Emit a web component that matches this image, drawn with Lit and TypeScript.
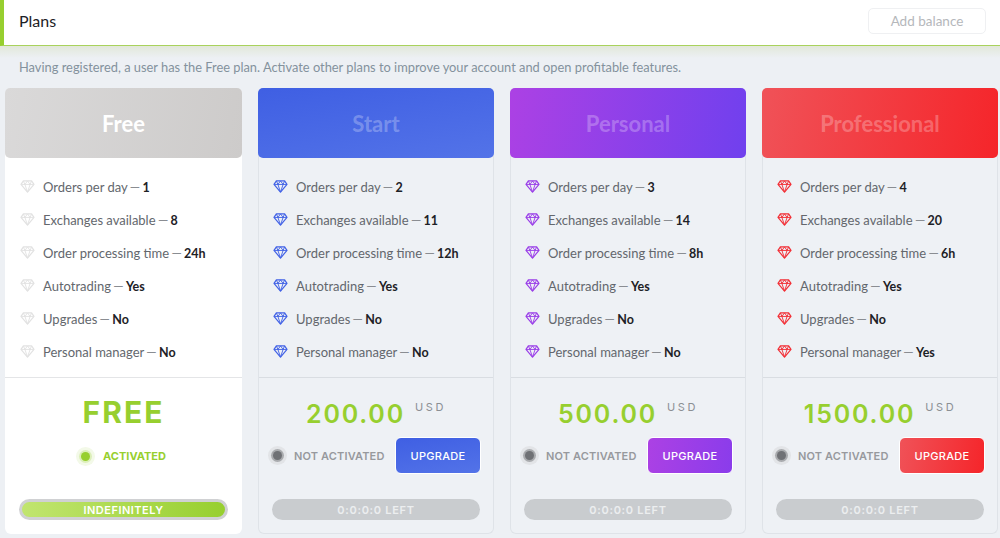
import { LitElement, html, css, svg } from 'lit';
import { customElement, property } from 'lit/decorators.js';

const diamond = (color: string) => html`
  <svg class="gem" viewBox="0 0 16 14" fill="none" stroke="${color}" stroke-width="1.3" stroke-linejoin="round">
    ${svg`<path d="M3.6 1h8.8L15 4.8 8 13 1 4.8z" />
    <path d="M1 4.8h14M5.2 4.8 8 13l2.8-8.2M3.6 1l1.6 3.8L8 1l2.8 3.8L12.4 1" stroke-width="1" />`}
  </svg>
`;

type Plan = {
  name: string;
  head: string;
  gem: string;
  btn: string;
  orders: string;
  exchanges: string;
  time: string;
  manager: string;
  price: string;
};

const plans: Plan[] = [
  { name: 'Start', head: 'linear-gradient(170deg, #3f5fe3, #5373e8)', gem: '#4262e6', btn: 'linear-gradient(170deg, #3f5fe3, #5373e8)', orders: '2', exchanges: '11', time: '12h', manager: 'No', price: '200.00' },
  { name: 'Personal', head: 'linear-gradient(100deg, #ac41e4, #7040ee)', gem: '#9a3fe8', btn: 'linear-gradient(100deg, #ac41e4, #8a3ceb)', orders: '3', exchanges: '14', time: '8h', manager: 'No', price: '500.00' },
  { name: 'Professional', head: 'linear-gradient(100deg, #f05258, #f5252a)', gem: '#f22f36', btn: 'linear-gradient(100deg, #f05258, #f5252a)', orders: '4', exchanges: '20', time: '6h', manager: 'Yes', price: '1500.00' },
];

const rowStyles = css`
  ul {
    list-style: none;
    margin: 0;
    padding: 12px 0 0 14px;
    height: 219px;
    box-sizing: border-box;
  }
  li {
    height: 33px;
    display: flex;
    align-items: center;
    gap: 8px;
    font-size: 13px;
    white-space: pre;
    color: #63676d;
  }
  b {
    color: #1d2126;
    font-size: 12.5px;
    font-weight: 700;
  }
  .dash {
    margin: 0 -1px;
    color: #8a8d92;
  }
  .gem {
    width: 15px;
    height: 13px;
    flex: none;
  }
`;

const row = (gem: string, k: string, v: string) =>
  html`<li>${diamond(gem)}<span>${k} <span class="dash">—</span> <b>${v}</b></span></li>`;

@customElement('plan-card')
class PlanCard extends LitElement {
  @property({ type: Object }) plan!: Plan;

  static styles = [
    rowStyles,
    css`
      :host {
        display: flex;
        flex-direction: column;
        border: 1px solid #dfe3e8;
        border-top: none;
        border-radius: 6px;
        background: #eef1f5;
        font-family: Lato, sans-serif;
      }
      .head {
        height: 70px;
        margin: 0 -1px;
        border-radius: 5px;
        display: flex;
        align-items: center;
        justify-content: center;
        font-size: 22px;
        font-weight: 700;
        color: rgba(255, 255, 255, 0.27);
      }
      .bottom {
        flex: 1;
        border-top: 1px solid #d9dde2;
        padding: 20px 13px 13px;
        display: flex;
        flex-direction: column;
      }
      .price {
        display: flex;
        justify-content: center;
        gap: 10px;
        height: 32px;
      }
      .amount {
        font-family: Inter, sans-serif;
        font-size: 25px;
        font-weight: 600;
        letter-spacing: 1.8px;
        line-height: 32px;
        color: #97cf2f;
      }
      .usd {
        font-family: Inter, sans-serif;
        font-size: 11px;
        letter-spacing: 2.6px;
        line-height: 18px;
        color: #8b8f94;
      }
      .status {
        display: flex;
        align-items: center;
        margin-top: 7px;
        height: 37px;
      }
      .dot {
        width: 9px;
        height: 9px;
        margin: 0 12px 0 1px;
        border-radius: 50%;
        background: #6f7175;
        box-shadow: 0 0 0 2px #a9abae, 0 0 0 5px #e2e4e7;
        flex: none;
      }
      .label {
        flex: 1;
        font-family: Inter, sans-serif;
        font-size: 11px;
        font-weight: 600;
        letter-spacing: 0.15px;
        color: #97999d;
        white-space: nowrap;
      }
      button {
        width: 86px;
        height: 37px;
        margin-right: -1px;
        border: 1px solid #fff;
        border-radius: 6px;
        color: #fff;
        font-family: Inter, sans-serif;
        font-size: 11px;
        font-weight: 500;
        letter-spacing: 0.3px;
        padding: 0;
      }
      .timer {
        margin-top: auto;
        height: 21px;
        border-radius: 11px;
        background: #c9cccf;
        color: #eceeef;
        display: flex;
        align-items: center;
        justify-content: center;
        font-family: Inter, sans-serif;
        font-size: 11px;
        font-weight: 600;
        letter-spacing: 0.7px;
      }
    `,
  ];

  render() {
    const p = this.plan;
    return html`
      <div class="head" style="background: ${p.head}">${p.name}</div>
      <ul>
        ${row(p.gem, 'Orders per day', p.orders)}
        ${row(p.gem, 'Exchanges available', p.exchanges)}
        ${row(p.gem, 'Order processing time', p.time)}
        ${row(p.gem, 'Autotrading', 'Yes')}
        ${row(p.gem, 'Upgrades', 'No')}
        ${row(p.gem, 'Personal manager', p.manager)}
      </ul>
      <div class="bottom">
        <div class="price">
          <span class="amount">${p.price}</span>
          <span class="usd">USD</span>
        </div>
        <div class="status">
          <span class="dot"></span>
          <span class="label">NOT ACTIVATED</span>
          <button style="background: ${p.btn}">UPGRADE</button>
        </div>
        <div class="timer">0:0:0:0 LEFT</div>
      </div>
    `;
  }
}

@customElement('app-root')
export class AppRoot extends LitElement {
  static styles = [
    rowStyles,
    css`
      :host {
        display: block;
        width: 1000px;
        height: 538px;
        overflow: hidden;
        background: #edf0f4;
        font-family: Lato, sans-serif;
      }
      header {
        height: 45px;
        background: #fff;
        border-left: 4px solid #97cf2f;
        border-bottom: 1px solid #a9d25c;
        display: flex;
        align-items: center;
        justify-content: space-between;
        padding: 0 14px 0 15px;
        font-size: 16px;
        color: #1d2126;
      }
      .title {
        margin-top: -4px;
      }
      .add {
        width: 116px;
        height: 24px;
        margin-top: -4px;
        border: 1px solid #eff0f2;
        border-radius: 5px;
        display: flex;
        align-items: center;
        justify-content: center;
        font-size: 13.5px;
        color: #b5b7bb;
      }
      .intro {
        height: 42px;
        padding-left: 19px;
        display: flex;
        align-items: center;
        font-size: 12.85px;
        color: #84929d;
        background: linear-gradient(#e2e8da, #edf0f4 12px);
      }
      .cards {
        display: grid;
        grid-template-columns: repeat(4, 236px);
        column-gap: 16px;
        padding-left: 6px;
        height: 446px;
      }
      .free {
        display: flex;
        flex-direction: column;
        margin-left: -1px;
        width: 237px;
        background: #fff;
        border-radius: 6px;
      }
      .free ul {
        padding-left: 15px;
      }
      .free .head {
        height: 70px;
        border-radius: 5px;
        background: linear-gradient(100deg, #dad9d9, #cdcbca);
        display: flex;
        align-items: center;
        justify-content: center;
        font-size: 22px;
        font-weight: 700;
        color: #fff;
      }
      .bottom {
        flex: 1;
        border-top: 1px solid #e4e5e7;
        padding: 17px 14px 14px;
        display: flex;
        flex-direction: column;
        align-items: center;
      }
      .word {
        font-family: Inter, sans-serif;
        font-size: 30px;
        font-weight: 700;
        letter-spacing: 2px;
        line-height: 34px;
        color: #97cf2f;
      }
      .on {
        display: flex;
        align-items: center;
        gap: 13px;
        margin-top: 20px;
        font-family: Inter, sans-serif;
        font-size: 11px;
        font-weight: 700;
        color: #97cf2f;
      }
      .on i {
        width: 9px;
        height: 9px;
        border-radius: 50%;
        background: #97cf2f;
        box-shadow: 0 0 0 2px #dcefb9, 0 0 0 5px #f3f9e8;
      }
      .bar {
        margin-top: auto;
        width: 100%;
        box-sizing: border-box;
        height: 21px;
        border: 3px solid #d0d1d3;
        border-radius: 11px;
        background: linear-gradient(90deg, #c1e56f, #97cf2f);
        color: #fff;
        display: flex;
        align-items: center;
        justify-content: center;
        font-family: Inter, sans-serif;
        font-size: 11px;
        font-weight: 600;
        letter-spacing: 0.5px;
      }
    `,
  ];

  render() {
    const gem = '#e2e2e2';
    return html`
      <header>
        <span class="title">Plans</span>
        <span class="add">Add balance</span>
      </header>
      <div class="intro">Having registered, a user has the Free plan. Activate other plans to improve your account and open profitable features.</div>
      <div class="cards">
        <div class="free">
          <div class="head">Free</div>
          <ul>
            ${row(gem, 'Orders per day', '1')}
            ${row(gem, 'Exchanges available', '8')}
            ${row(gem, 'Order processing time', '24h')}
            ${row(gem, 'Autotrading', 'Yes')}
            ${row(gem, 'Upgrades', 'No')}
            ${row(gem, 'Personal manager', 'No')}
          </ul>
          <div class="bottom">
            <div class="word">FREE</div>
            <div class="on"><i></i>ACTIVATED</div>
            <div class="bar">INDEFINITELY</div>
          </div>
        </div>
        ${plans.map((p) => html`<plan-card .plan=${p}></plan-card>`)}
      </div>
    `;
  }
}
